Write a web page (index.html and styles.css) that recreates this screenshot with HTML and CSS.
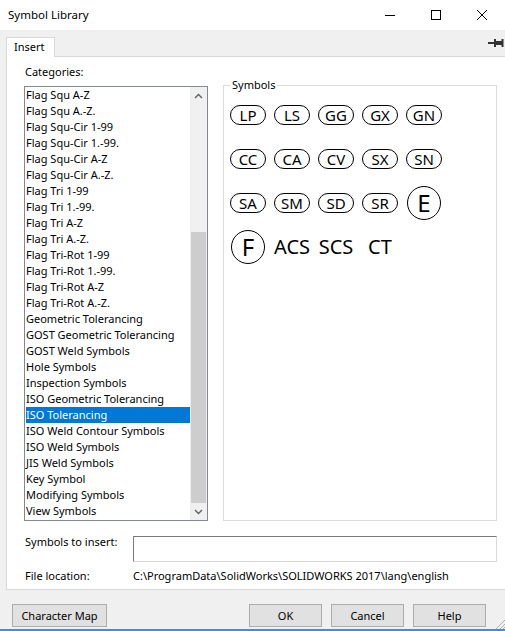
FILE: index.html
```html
<!DOCTYPE html>
<html lang="en">
<head>
    <meta charset="UTF-8">
    <meta name="viewport" content="width=device-width, initial-scale=1.0">
    <title>Symbol Library</title>
    <link rel="stylesheet" href="styles.css">
</head>
<body>
    <div class="window">
        <div class="titlebar">
            <span class="title">Symbol Library</span>
            <div class="controls">
                <span class="ctl">
                    <svg width="10" height="10" viewBox="0 0 10 10"><path d="M0 5.5H10" stroke="#000" stroke-width="1"/></svg>
                </span>
                <span class="ctl">
                    <svg width="10" height="10" viewBox="0 0 10 10"><rect x="0.5" y="0.5" width="9" height="9" fill="none" stroke="#000" stroke-width="1"/></svg>
                </span>
                <span class="ctl">
                    <svg width="10" height="10" viewBox="0 0 10 10"><path d="M0 0L10 10M10 0L0 10" stroke="#000" stroke-width="1"/></svg>
                </span>
            </div>
        </div>

        <div class="tabstrip">
            <div class="tab">Insert</div>
            <svg class="pin" width="16" height="10" viewBox="0 0 16 10">
                <path d="M0 5H7" stroke="#333" stroke-width="2"/>
                <path d="M7 1V9" stroke="#333" stroke-width="2"/>
                <rect x="8" y="3" width="6" height="4" fill="#333"/>
                <path d="M14.5 1V9" stroke="#333" stroke-width="2"/>
            </svg>
        </div>

        <div class="panel">
            <div class="top">
                <div class="categories">
                    <div class="label">Categories:</div>
                    <div class="listbox">
                        <ul class="items">
                            <li>Flag Squ A-Z</li>
                            <li>Flag Squ A.-Z.</li>
                            <li>Flag Squ-Cir 1-99</li>
                            <li>Flag Squ-Cir 1.-99.</li>
                            <li>Flag Squ-Cir A-Z</li>
                            <li>Flag Squ-Cir A.-Z.</li>
                            <li>Flag Tri 1-99</li>
                            <li>Flag Tri 1.-99.</li>
                            <li>Flag Tri A-Z</li>
                            <li>Flag Tri A.-Z.</li>
                            <li>Flag Tri-Rot 1-99</li>
                            <li>Flag Tri-Rot 1.-99.</li>
                            <li>Flag Tri-Rot A-Z</li>
                            <li>Flag Tri-Rot A.-Z.</li>
                            <li>Geometric Tolerancing</li>
                            <li>GOST Geometric Tolerancing</li>
                            <li>GOST Weld Symbols</li>
                            <li>Hole Symbols</li>
                            <li>Inspection Symbols</li>
                            <li>ISO Geometric Tolerancing</li>
                            <li class="selected">ISO Tolerancing</li>
                            <li>ISO Weld Contour Symbols</li>
                            <li>ISO Weld Symbols</li>
                            <li>JIS Weld Symbols</li>
                            <li>Key Symbol</li>
                            <li>Modifying Symbols</li>
                            <li>View Symbols</li>
                        </ul>
                        <div class="scrollbar">
                            <div class="arrow">
                                <svg width="9" height="6" viewBox="0 0 9 6"><path d="M1 5L4.5 1.5L8 5" fill="none" stroke="#606060" stroke-width="1.4"/></svg>
                            </div>
                            <div class="track">
                                <div class="thumb"></div>
                            </div>
                            <div class="arrow">
                                <svg width="9" height="6" viewBox="0 0 9 6"><path d="M1 1L4.5 4.5L8 1" fill="none" stroke="#606060" stroke-width="1.4"/></svg>
                            </div>
                        </div>
                    </div>
                </div>

                <fieldset class="symbols">
                    <legend>Symbols</legend>
                    <div class="grid">
                        <span class="pill">LP</span>
                        <span class="pill">LS</span>
                        <span class="pill">GG</span>
                        <span class="pill">GX</span>
                        <span class="pill">GN</span>
                        <span class="pill">CC</span>
                        <span class="pill">CA</span>
                        <span class="pill">CV</span>
                        <span class="pill">SX</span>
                        <span class="pill">SN</span>
                        <span class="pill">SA</span>
                        <span class="pill">SM</span>
                        <span class="pill">SD</span>
                        <span class="pill">SR</span>
                        <span class="circle">E</span>
                        <span class="circle">F</span>
                        <span class="plain">ACS</span>
                        <span class="plain">SCS</span>
                        <span class="plain">CT</span>
                    </div>
                </fieldset>
            </div>

            <div class="row insert-row">
                <span class="row-label">Symbols to insert:</span>
                <input type="text" class="insert">
            </div>
            <div class="row file-row">
                <span class="row-label">File location:</span>
                <span>C:\ProgramData\SolidWorks\SOLIDWORKS 2017\lang\english</span>
            </div>
        </div>

        <div class="buttons">
            <button class="btn charmap">Character Map</button>
            <div class="right-buttons">
                <button class="btn">OK</button>
                <button class="btn">Cancel</button>
                <button class="btn">Help</button>
            </div>
        </div>

        <svg class="grip" width="10" height="10" viewBox="0 0 10 10">
            <path d="M10 1L1 10M10 5L5 10M10 8L8 10" stroke="#b0b0b0" stroke-width="1"/>
        </svg>
    </div>
</body>
</html>
```

FILE: styles.css
```css
body {
    margin: 0;
    font-family: 'Noto Sans', 'Open Sans', sans-serif;
    font-size: 11px;
    color: #000;
    background: #f0f0f0;
}

.window {
    position: relative;
    width: 505px;
    height: 631px;
    overflow: hidden;
    display: flex;
    flex-direction: column;
    box-sizing: border-box;
    border-bottom: 2px solid #3d8fdd;
}

/* title bar */
.titlebar {
    height: 30px;
    background: #fff;
    display: flex;
    justify-content: space-between;
    align-items: center;
}

.title {
    padding-left: 8px;
    padding-bottom: 1px;
    font-size: 11.5px;
}

.controls {
    display: flex;
    height: 30px;
}

.ctl {
    width: 46px;
    display: flex;
    align-items: center;
    justify-content: center;
}

.ctl svg {
    display: block;
}

/* tabs */
.tabstrip {
    height: 26px;
    display: flex;
    justify-content: space-between;
    align-items: flex-end;
    padding-left: 6px;
}

.tab {
    height: 19px;
    line-height: 18px;
    padding: 0 9px 0 7px;
    background: #fff;
    border: 1px solid #d9d9d9;
    border-bottom: 0;
    margin-bottom: -1px;
    position: relative;
}

.pin {
    align-self: flex-start;
    margin-top: 8px;
    margin-right: 1px;
}

.panel {
    margin-left: 6px;
    height: 534px;
    box-sizing: border-box;
    background: #fff;
    border: 1px solid #d9d9d9;
    border-right: 0;
    padding: 7px 0 0 17px;
}

.top {
    display: flex;
    gap: 15px;
}

.categories {
    width: 184px;
}

.label {
    line-height: 16px;
    margin-bottom: 6px;
    padding-left: 1px;
}

.listbox {
    height: 435px;
    box-sizing: border-box;
    border: 1px solid #828790;
    display: flex;
}

.items {
    list-style: none;
    margin: 0;
    padding: 0 0 0 1px;
    width: 164px;
    overflow: hidden;
}

.items li {
    height: 16px;
    line-height: 16px;
    white-space: nowrap;
}

.items li.selected {
    background: #0078d7;
    color: #fff;
}

.scrollbar {
    width: 17px;
    margin-left: auto;
    background: #f0f0f0;
    display: flex;
    flex-direction: column;
}

.arrow {
    height: 17px;
    display: flex;
    align-items: center;
    justify-content: center;
}

.track {
    flex: 1;
    display: flex;
    flex-direction: column;
    justify-content: flex-end;
}

.thumb {
    height: 271px;
    margin: 0 1px;
    background: #cdcdcd;
}

/* symbols group */
.symbols {
    margin: 13px 0 0 0;
    width: 274px;
    height: 444px;
    box-sizing: border-box;
    border: 1px solid #dcdcdc;
    padding: 0 0 0 6px;
}

.symbols legend {
    padding: 0 2px;
    line-height: 16px;
}

.grid {
    margin-top: 5px;
    display: grid;
    grid-template-columns: repeat(5, 36px);
    grid-auto-rows: 34px;
    column-gap: 8px;
    row-gap: 10px;
    justify-items: center;
    align-items: center;
}

.pill {
    width: 36px;
    height: 20px;
    box-sizing: border-box;
    border: 1px solid #000;
    border-radius: 10px;
    font-size: 15px;
    line-height: 18px;
    text-align: center;
}

.circle {
    width: 34px;
    height: 34px;
    box-sizing: border-box;
    border: 1px solid #000;
    border-radius: 50%;
    font-size: 24px;
    line-height: 32px;
    text-align: center;
}

.plain {
    font-size: 20px;
    line-height: 24px;
    white-space: nowrap;
}

/* bottom rows */
.row {
    display: flex;
    align-items: flex-start;
    line-height: 16px;
    padding-left: 1px;
}

.row-label {
    width: 108px;
    flex: none;
}

.insert-row {
    margin-top: 13px;
}

.insert {
    margin: 2px 0 0 0;
    width: 364px;
    height: 26px;
    box-sizing: border-box;
    border: 1px solid #d9d9d9;
    border-top-color: #7a7a7a;
    border-left-color: #7a7a7a;
    padding: 0;
}

.file-row {
    margin-top: 6px;
    white-space: nowrap;
}

/* dialog buttons */
.buttons {
    display: flex;
    justify-content: space-between;
    padding: 14px 19px 0 12px;
}

.right-buttons {
    display: flex;
    gap: 9px;
}

.btn {
    height: 23px;
    width: 73px;
    padding: 0;
    font-family: inherit;
    font-size: 11px;
    background: #e1e1e1;
    border: 1px solid #adadad;
    color: #000;
}

.btn.charmap {
    width: 95px;
}

.grip {
    position: absolute;
    right: 0;
    bottom: 0;
}
```
